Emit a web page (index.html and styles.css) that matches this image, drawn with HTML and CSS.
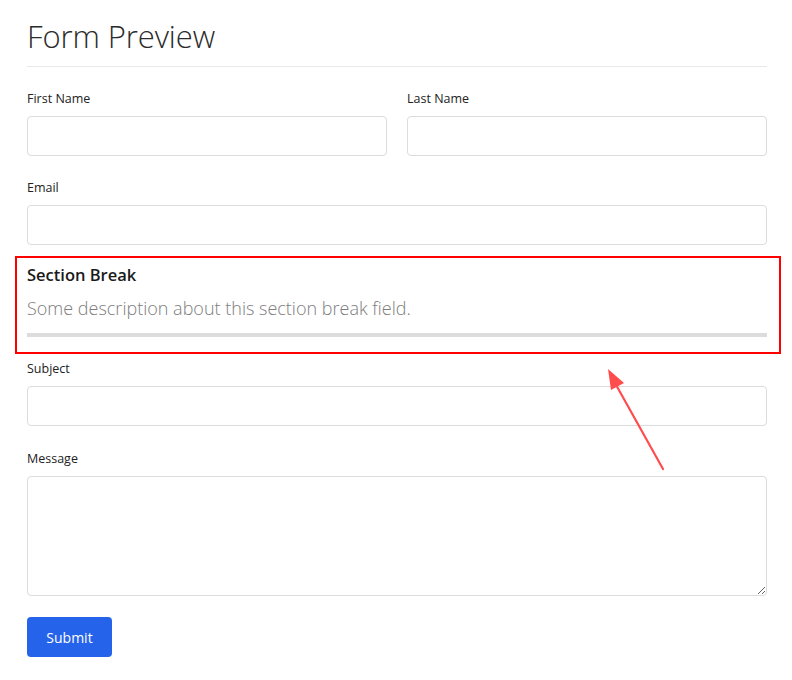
FILE: index.html
```html
<!DOCTYPE html>
<html lang="en">
<head>
<meta charset="utf-8">
<title>Form Preview</title>
<link rel="stylesheet" href="styles.css">
</head>
<body>
<div class="page">
  <h1 class="title">Form Preview</h1>
  <form class="form">
    <div class="row">
      <div class="group">
        <label class="label">First Name</label>
        <input class="input" type="text">
      </div>
      <div class="group">
        <label class="label">Last Name</label>
        <input class="input" type="text">
      </div>
    </div>
    <div class="group">
      <label class="label">Email</label>
      <input class="input" type="email">
    </div>
    <div class="section">
      <h3 class="section-title">Section Break</h3>
      <p class="section-desc">Some description about this section break field.</p>
      <div class="section-bar"></div>
      <div class="highlight"></div>
    </div>
    <div class="group">
      <label class="label">Subject</label>
      <input class="input" type="text">
    </div>
    <div class="group group-message">
      <label class="label">Message</label>
      <textarea class="textarea"></textarea>
    </div>
    <button type="button" class="submit">Submit</button>
  </form>
  <svg class="arrow" width="80" height="120" viewBox="0 0 80 120">
    <line x1="62" y1="111" x2="14" y2="25" stroke="#ff4d4d" stroke-width="2.2" stroke-linecap="round"/>
    <polygon points="7,11 23,25 10,32" fill="#ff4d4d"/>
  </svg>
</div>
</body>
</html>
```

FILE: styles.css
```css
* { box-sizing: border-box; }
html, body { margin: 0; padding: 0; background: #fff; }
body {
  font-family: "Open Sans", "Noto Sans", "Liberation Sans", sans-serif;
  color: #212529;
}
.page {
  position: relative;
  width: 792px;
  padding: 16px 25px 0 27px;
}
.title {
  margin: 0;
  font-size: 31px;
  font-weight: 300;
  line-height: 40px;
  height: 51px;
  color: #2b2b2b;
  border-bottom: 1px solid #e9e9e9;
  letter-spacing: -0.1px;
}
.form { display: flex; flex-direction: column; padding-top: 21px; }
.row { display: grid; grid-template-columns: 1fr 1fr; gap: 20px; }
.group { display: flex; flex-direction: column; margin-bottom: 21px; }
.group-message { margin-top: 1px; }
.label {
  display: block;
  font-size: 12.5px;
  line-height: 20px;
  height: 20px;
  padding-top: 1px;
  margin-bottom: 8px;
  color: #222;
}
.input, .textarea {
  display: block;
  width: 100%;
  height: 40px;
  border: 1px solid #dcdcdc;
  border-radius: 4px;
  background: #fff;
  font: inherit;
  padding: 6px 10px;
}
.textarea { height: 120px; resize: vertical; }
.section {
  position: relative;
  margin-top: -10px;
  padding-top: 8px;
  margin-bottom: 21px;
}
.section-title {
  margin: 0;
  font-size: 16.5px;
  font-weight: 600;
  line-height: 22px;
  color: #1a1a1a;
}
.section-desc {
  margin: 10px 0 0;
  font-size: 18px;
  font-weight: 300;
  line-height: 24px;
  color: #7d7d7d;
  letter-spacing: 0;
}
.section-bar {
  margin-top: 13px;
  height: 4px;
  background: #dcdcdc;
}
.highlight {
  position: absolute;
  left: -12px;
  right: -14px;
  top: 0;
  bottom: -17px;
  border: 2px solid #ff0000;
  pointer-events: none;
}
.submit {
  align-self: flex-start;
  width: 85px;
  height: 40px;
  border: 0;
  border-radius: 4px;
  background: #2563eb;
  color: #fff;
  font: inherit;
  font-size: 14px;
  cursor: pointer;
}
.arrow {
  position: absolute;
  left: 601px;
  top: 358px;
}
```
